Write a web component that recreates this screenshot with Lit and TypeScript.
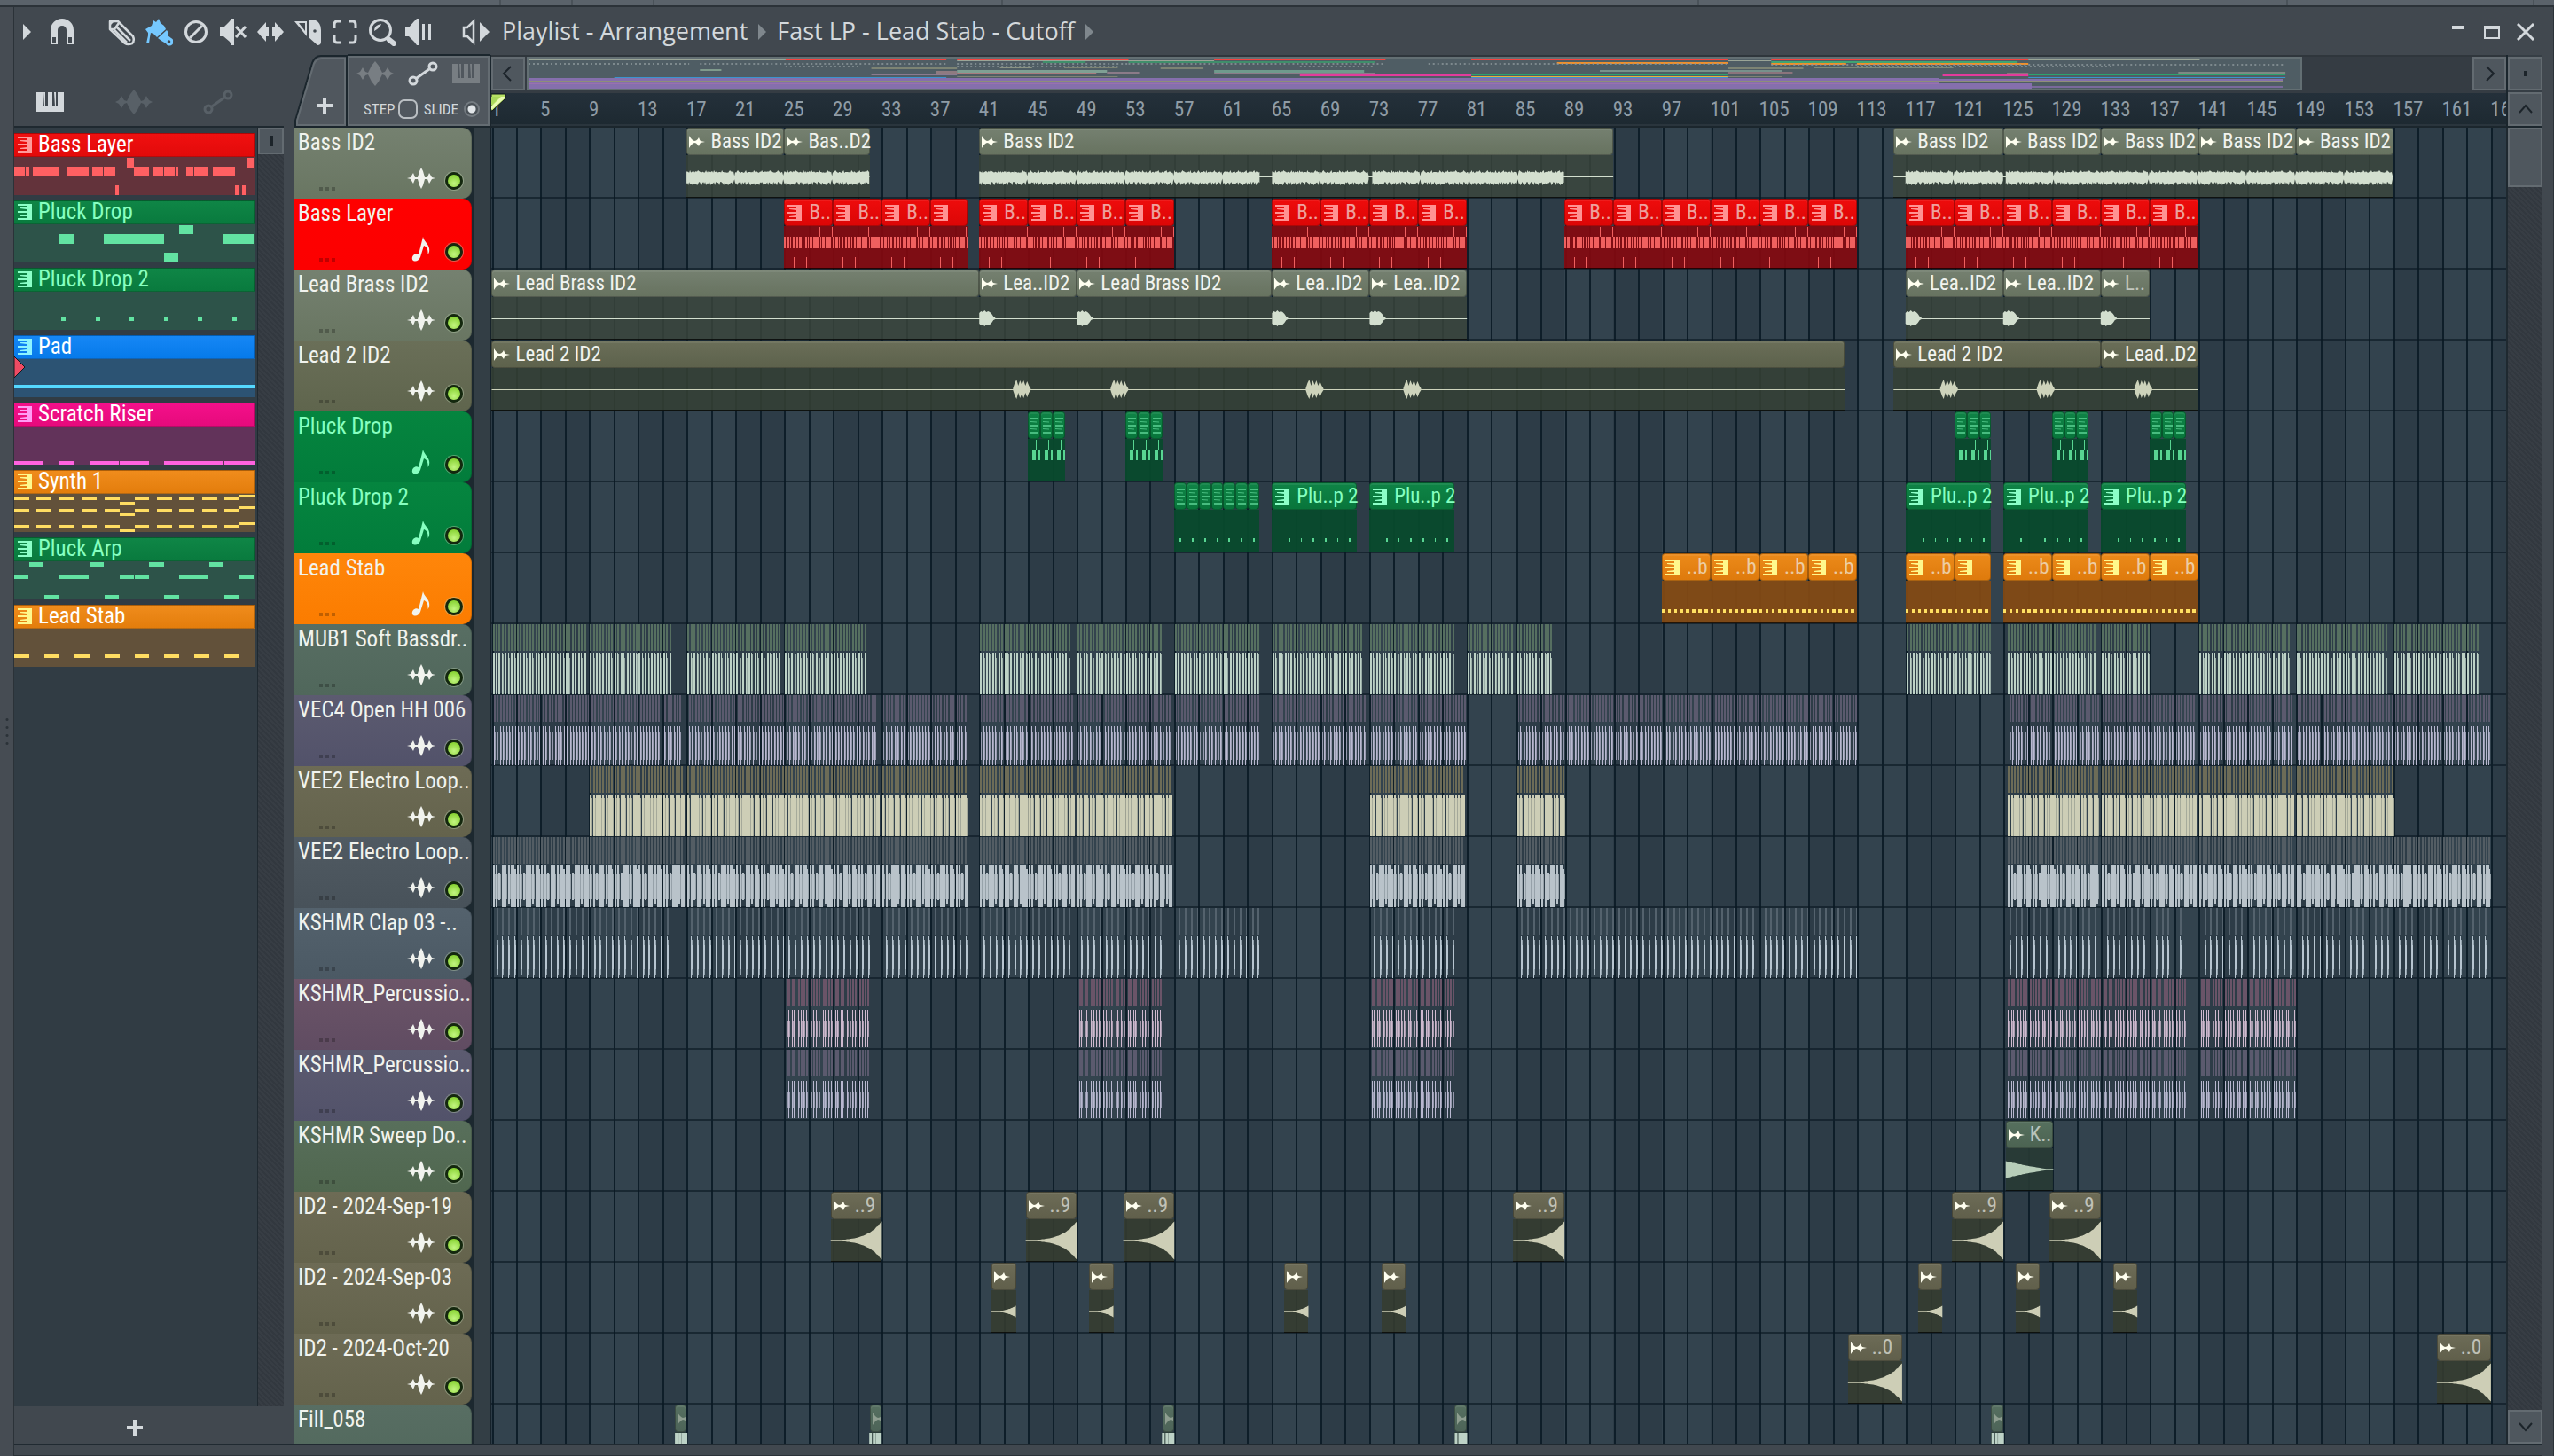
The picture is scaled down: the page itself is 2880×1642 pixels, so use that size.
import { LitElement, html, svg, css, nothing } from "lit";

/* ---------- time scale ---------- */
const VIEW_W = 2271; // drawing units across the visible part of the arrangement
const BAR = 13.74; // drawing units per bar
const barX = (b: number) => (b - 1) * BAR + 0.5;
const pct = (u: number) => `${((u / VIEW_W) * 100).toFixed(4)}%`;

/* ---------- note patterns ---------- */
type Note = [number, number, number, number];
interface Pattern { x: number; w: number; bars: number; notes: Note[] }
const row = (y: number, h: number, w: number, xs: number[]): Note[] => xs.map((x) => [x, y, w, h]);
const spans = (y: number, h: number, list: [number, number][]): Note[] => list.map(([x, w]) => [x, y, w, h]);

const patterns: Record<string, Pattern> = {
  bass: {
    x: 35, w: 588, bars: 4,
    notes: [
      ...spans(34, 32, [[35, 27], [63, 8], [81, 27], [109, 27], [137, 8], [163, 18], [182, 26], [209, 8], [227, 26], [254, 28],
        [328, 27], [356, 8], [373, 27], [401, 27], [429, 8], [456, 18], [475, 26], [502, 9], [520, 26], [547, 28]]),
      ...spans(3, 32, [[310, 18], [603, 18]]),
      ...spans(96, 32, [[282, 9], [575, 9], [593, 9]]),
    ],
  },
  bassClip: {
    x: 0, w: 110, bars: 4,
    notes: [0, 27.5, 55, 82.5].flatMap((o) => [
      ...spans(34, 34, [[0, 2], [3, 2], [6, 4], [11, 2], [14, 3], [18, 1], [20, 4]]).map(([x, y, w, h]): Note => [x + o, y, w, h]),
      [o + 26, 2, 1, 32] as Note, [o + 23, 97, 1, 32] as Note,
    ]),
  },
  pluck: {
    x: 35, w: 588, bars: 1,
    notes: [...spans(33, 32, [[145, 36], [255, 72], [328, 73], [548, 73]]), ...spans(2, 32, [[438, 36]]), ...spans(95, 32, [[401, 36]])],
  },
  pluck2: { x: 35, w: 588, bars: 7, notes: row(88, 11, 11, [150, 234, 317, 401, 485, 568]) },
  pluck2s: { x: 0, w: 84, bars: 1, notes: row(88, 11, 11, [36]) },
  pad: { x: 0, w: 384, bars: 4, notes: [[0, 88, 384, 12]] },
  riser: { x: 23, w: 384, bars: 8, notes: spans(117, 11, [[23, 47], [95, 23], [143, 47], [191, 47], [263, 47], [311, 47], [359, 48]]) },
  synth: {
    x: 23, w: 384, bars: 4,
    notes: [12, 50, 104].flatMap((y) => [
      ...row(y, 9, 24, [23, 59, 95, 131, 167, 215, 251, 287, 323, 359]),
      ...row(y + 15, 9, 24, [191]), ...row(y - 8, 9, 24, [383]),
    ]),
  },
  arp: {
    x: 23, w: 384, bars: 4,
    notes: [...row(4, 14, 23, [47, 143, 239, 335]), ...row(45, 14, 23, [23, 95, 119, 191, 215, 287, 311, 383]), ...row(114, 14, 23, [71, 167, 263, 359])],
  },
  stab: { x: 23, w: 384, bars: 4, notes: row(88, 11, 24, [23, 71, 119, 167, 215, 263, 311, 359]) },
};

const noteView = (key: string, bars?: number) => {
  const p = patterns[key];
  const w = bars ? (p.w * bars) / p.bars : p.w;
  return html`<svg class="notes" viewBox="${p.x} 0 ${w} 129" preserveAspectRatio="none" aria-hidden="true">
    ${p.notes.map(([x, y, nw, nh]) => svg`<rect x=${x} y=${y} width=${nw} height=${nh} />`)}
  </svg>`;
};

/* ---------- picker ---------- */
const picker = [
  { name: "Bass Layer", tone: "red", pat: "bass" },
  { name: "Pluck Drop", tone: "green", pat: "pluck" },
  { name: "Pluck Drop 2", tone: "green", pat: "pluck2" },
  { name: "Pad", tone: "blue", pat: "pad", cue: true },
  { name: "Scratch Riser", tone: "pink", pat: "riser" },
  { name: "Synth 1", tone: "orange", pat: "synth" },
  { name: "Pluck Arp", tone: "green", pat: "arp" },
  { name: "Lead Stab", tone: "orange", pat: "stab" },
];

/* ---------- tracks ---------- */
type Clip = { s: number; e: number; t?: string; dim?: boolean; pat?: string; mini?: boolean };
interface Track {
  name: string; tone: string; note?: boolean;
  clips?: Clip[]; wave?: string; beats?: string; ranges?: [number, number][];
}
const chain = (s: number, n: number, len: number, extra: Partial<Clip>): Clip[] =>
  Array.from({ length: n }, (_, i) => ({ s: s + i * len, e: s + (i + 1) * len, ...extra }));

const B: Partial<Clip> = { t: "B..", dim: true, pat: "bassClip" };
const S: Partial<Clip> = { t: "..b", dim: true, pat: "stab" };
const M: Partial<Clip> = { mini: true, pat: "pluck" };
const at = (starts: number[], len: number, t?: string): Clip[] => starts.map((s) => ({ s, e: s + len, t, dim: true }));

const tracks: Track[] = [
  {
    name: "Bass ID2", tone: "sage", wave: "bass",
    clips: [{ s: 17, e: 25, t: "Bass ID2" }, { s: 25, e: 32, t: "Bas..D2" }, { s: 41, e: 93, t: "Bass ID2" }, { s: 116, e: 125, t: "Bass ID2" },
      ...chain(125, 4, 8, { t: "Bass ID2" })],
  },
  {
    name: "Bass Layer", tone: "red", note: true,
    clips: [...chain(25, 3, 4, B), { s: 37, e: 40, pat: "bassClip" }, ...chain(41, 4, 4, B), ...chain(65, 4, 4, B), ...chain(89, 6, 4, B), ...chain(117, 6, 4, B)],
  },
  {
    name: "Lead Brass ID2", tone: "sage", wave: "brass",
    clips: [{ s: 1, e: 41, t: "Lead Brass ID2" }, { s: 41, e: 49, t: "Lea..ID2" }, { s: 49, e: 65, t: "Lead Brass ID2" },
      ...chain(65, 2, 8, { t: "Lea..ID2" }), ...chain(117, 2, 8, { t: "Lea..ID2" }), { s: 133, e: 137, t: "L..", dim: true }],
  },
  {
    name: "Lead 2 ID2", tone: "olive", wave: "lead",
    clips: [{ s: 1, e: 112, t: "Lead 2 ID2" }, { s: 116, e: 133, t: "Lead 2 ID2" }, { s: 133, e: 141, t: "Lead..D2" }],
  },
  { name: "Pluck Drop", tone: "green", note: true, clips: [45, 53, 121, 129, 137].flatMap((s) => chain(s, 3, 1, M)) },
  {
    name: "Pluck Drop 2", tone: "green", note: true,
    clips: [...chain(57, 7, 1, { mini: true, pat: "pluck2s" }), ...[65, 73, 117, 125, 133].map((s) => ({ s, e: s + 7, t: "Plu..p 2", pat: "pluck2" }))],
  },
  {
    name: "Lead Stab", tone: "orange", note: true,
    clips: [...chain(97, 4, 4, S), { s: 117, e: 121, ...S }, { s: 121, e: 124, pat: "stab" }, ...chain(125, 4, 4, S)],
  },
  {
    name: "MUB1 Soft Bassdr..", tone: "moss", beats: "kick",
    ranges: [[1, 8.65], [9, 15.85], [17, 24.65], [25, 31.85], [41, 48.6], [49, 55.9], [57, 64], [65, 72.6], [73, 79.9], [81, 84.8], [85, 88],
      [117, 123.9], [125.3, 132.6], [133, 137], [141, 148.6], [149, 156.6], [157, 163.9]],
  },
  {
    name: "VEC4 Open HH 006", tone: "violet", beats: "hat",
    ranges: [[1.1, 16.7], [17.1, 32.7], [33, 40], [41, 48.7], [49, 56.8], [57, 64], [65, 72.8], [73, 81], [85, 113],
      [125.4, 132.8], [133, 140.8], [141, 148.8], [149, 165]],
  },
  {
    name: "VEE2 Electro Loop..", tone: "khaki", beats: "dense",
    ranges: [[9, 16.7], [17, 32.7], [33, 40], [41, 48.7], [49, 56.8], [73, 80.8], [85, 89], [125.3, 132.8], [133, 140.8], [141, 148.8], [149, 157]],
  },
  {
    name: "VEE2 Electro Loop..", tone: "slate", beats: "loop",
    ranges: [[1, 16.7], [17, 32.7], [33, 40], [41, 48.7], [49, 56.8], [73, 80.8], [85, 89], [125.3, 132.8], [133, 140.8], [141, 148.8], [149, 165]],
  },
  {
    name: "KSHMR Clap 03 -..", tone: "steel", beats: "clap",
    ranges: [[1.3, 15.9], [17.3, 32], [33.3, 40], [41.3, 48.6], [49.3, 56], [57.3, 64], [73.3, 80], [85.3, 113], [125.4, 132.6], [133.4, 140], [141.4, 148.7], [149.4, 165]],
  },
  { name: "KSHMR_Percussio..", tone: "plum", beats: "perc", ranges: [[25, 32], [49, 56], [73, 80], [125.3, 140], [141, 149]] },
  { name: "KSHMR_Percussio..", tone: "violet", beats: "perc", ranges: [[25, 32], [49, 56], [73, 80], [125.3, 140], [141, 149]] },
  { name: "KSHMR Sweep Do..", tone: "leaf", wave: "fall", clips: at([125.2], 3.9, "K..") },
  { name: "ID2 - 2024-Sep-19", tone: "khaki", wave: "rise", clips: at([28.8, 44.8, 52.8, 84.8, 120.8, 128.8], 4.2, "..9") },
  { name: "ID2 - 2024-Sep-03", tone: "khaki", wave: "swell", clips: at([42, 50, 66, 74, 118, 126, 134], 2) },
  { name: "ID2 - 2024-Oct-20", tone: "khaki", wave: "rise", clips: at([112.25, 160.55], 4.45, "..0") },
  { name: "Fill_058", tone: "moss", wave: "fill", clips: at([16, 32, 56, 80, 124], 1) },
];

/* ---------- wave drawing ---------- */
const rnd = (i: number) => { const v = Math.sin(i * 127.1 + 11.7) * 43758.5453; return v - Math.floor(v); };

function wobble(from: number, to: number, cy: number): string {
  const x0 = barX(from), x1 = barX(to);
  let up = "", down = "";
  for (let x = Math.round(x0), i = 0; x <= x1; x += 1, i++) {
    const dip = i % 55 === 54 ? 0.3 : 1;
    const a = (5 + (i % 9 === 4 ? 3 : rnd(i) * 2)) * dip;
    const b = (5 + (i % 5 === 2 ? 4 : rnd(i + 500) * 3)) * dip;
    up += `${i ? "L" : "M"}${x} ${(cy - a).toFixed(1)}`;
    down = `L${x} ${(cy + b).toFixed(1)}` + down;
  }
  return up + down + "Z";
}
/* A short hit given as half-heights on a two-unit raster. */
function hitShape(x0: number, heights: number[]): string {
  const up = heights.map((h, i) => `${i ? "L" : "M"}${x0 + i * 2} ${55 - h}`).join("");
  const down = heights.map((h, i) => `L${x0 + i * 2} ${55 + h}`).reverse().join("");
  return up + down + "Z";
}
const burst = (b: number) => hitShape(Math.round(barX(b)), [6, 8, 7, 9, 7, 8, 7, 5, 2, 1]);
const puff = (b: number) => hitShape(Math.round(barX(b)) - 3, [1, 7, 11, 4, 10, 5, 10, 4, 9, 4, 1]);

function ramp(s: number, e: number, amp: number, k: number, falling: boolean): string {
  const x0 = barX(s), w = barX(e) - x0, n = 28;
  let up = "", down = "";
  for (let i = 0; i <= n; i++) {
    const f = i / n;
    const g = falling ? Math.pow(1 - f, 1.3) : (Math.exp(k * f) - 1) / (Math.exp(k) - 1);
    const a = Math.max(0.8, amp * g * (1 - rnd(i) * 0.08));
    const x = (x0 + w * f).toFixed(1);
    up += `${i ? "L" : "M"}${x} ${(55 - a).toFixed(1)}`;
    down = `L${x} ${(55 + a).toFixed(1)}` + down;
  }
  return up + down + "Z";
}
const flat = (c: Clip) => `M${barX(c.s)} 55H${barX(c.e)}V56H${barX(c.s)}Z`;

function wavePath(t: Track): string {
  const clips = t.clips ?? [];
  switch (t.wave) {
    case "bass":
      return clips.map(flat).join("") +
        ([[17, 25], [25, 32], [41, 64], [65, 73], [73.2, 89], [117, 125], [125.2, 133], [133, 141], [141, 149], [149, 157]] as [number, number][])
          .map(([a, b]) => wobble(a, b, 56)).join("");
    case "brass": return clips.map(flat).join("") + [41, 49, 65, 73, 117, 125, 133].map(burst).join("");
    case "lead": return clips.map(flat).join("") + [44, 52, 68, 76, 120, 128, 136].map(puff).join("");
    case "rise": return clips.map((c) => ramp(c.s, c.e, 23, 3.6, false)).join("");
    case "swell": return clips.map((c) => ramp(c.s, c.e, 7, 2.8, false)).join("");
    case "fall": return clips.map((c) => ramp(c.s, c.e, 10, 0, true)).join("");
    case "fill": return clips.map((c) => { const x = Math.round(barX(c.s)); return `M${x} 32h3v48h-3zM${x + 4} 32h3v48h-3zM${x + 7.3} 32h6.700v48h-6.700z`; }).join("");
  }
  return "";
}

/* Tiny repeated samples are drawn as stripes: caps above, hits below. */
function beatPaths(t: Track) {
  let cap = "", hit = "", tail = "";
  const v = (x: number, w: number, y0: number, y1: number) => `M${x} ${y0}h${w}V${y1}h${-w}z`;
  for (const [s, e] of t.ranges ?? []) {
    const x1 = barX(e) - 1;
    if (t.beats === "perc") {
      const offs = [2, 4, 8, 10, 15, 18, 21, 24, 29, 32, 35, 38, 43, 45, 49, 52];
      for (let b = Math.floor(s); b < e; b += 4)
        for (const o of offs) {
          const x = Math.round(barX(b) + o + 1);
          if (x > x1 || x < barX(s)) continue;
          cap += v(x, 2, 0, 30);
          hit += v(x, 1, 35, 77);
          tail += v(x + 1, 1, 47, 65);
        }
      continue;
    }
    const step = t.beats === "clap" ? BAR / 2 : BAR / 4;
    for (let x = barX(s) + 1, k = 0; x < x1; x += step, k++) {
      const p = Math.round(x);
      if (t.beats === "kick") {
        cap += v(p, 2, 0, 30); hit += v(p, k % 2 ? 1 : 2, 32, 79);
        tail += v(p + 1, 1, k % 3 ? 38 : 34, 79);
      } else if (t.beats === "hat") {
        cap += v(p, 2, 0, 30); hit += v(p, 1, 35, 79);
        tail += v(p + 1, 1, 42, 73);
      } else if (t.beats === "dense") {
        cap += v(p, 2, 0, 30); hit += v(p, k % 4 === 2 ? 4 : 2, 32, 79);
        tail += v(p + 2, 1, 36, 79);
      } else if (t.beats === "loop") {
        cap += v(p, 2, 0, 30);
        const c = k % 8;
        hit += v(p, c === 3 || c === 6 ? 4 : 2, c === 2 ? 40 : c === 7 ? 36 : 32, c === 2 ? 71 : c === 5 ? 75 : 79);
        tail += v(p + 2, 1, 42, 70);
      } else {
        cap += v(p, 2, 0, 30);
        hit += v(p, 1, 32, 79) + v(p + 1, 1, 42, 69);
        tail += v(p + 1, 1, 36, 75);
      }
    }
  }
  return { cap, hit, tail };
}

const gridLines = Array.from({ length: 83 }, (_, i) => Math.round(barX(1 + i * 2)));
const gridPath = gridLines.map((x) => `M${x} 0h2v80h-2z`).join("");

/* ---------- icons ---------- */
const icon = (cls: string, vb: string, body: unknown) => html`<svg class=${cls} viewBox=${vb} aria-hidden="true">${body}</svg>`;
const waveIcon = (cls: string) => icon(cls, "0 0 42 28", svg`<path d="M0 14L4 12L7 7L10 12L13 13L17 5L21 0L25 5L29 13L32 12L35 7L38 12L42 14L38 16L35 21L32 16L29 15L25 23L21 28L17 23L13 15L10 16L7 21L4 16Z"/>`);
const starWave = icon("star", "0 0 32 24", svg`<path d="M0 12L4 11L7 6L9 11L12 11L14 4L16 0L18 4L20 11L23 11L25 6L28 11L32 12L28 13L25 18L23 13L20 13L18 20L16 24L14 20L12 13L9 13L7 18L4 13Z"/>`);
const noteIcon = icon("qnote", "0 0 22 28", svg`<path d="M13 0C14 5 19 8 20 13C20.500 16 20 18 18.500 20C19 14 17 11 14 10L10 23C9 26 6 28 3.500 27.500C0.500 27 0 23.500 2 21C4 19 6.500 19 8 20Z"/>`);
const autoIcon = (cls: string) => icon(cls, "0 0 34 28", svg`<g fill="none" stroke="currentColor" stroke-width="3"><circle cx="6" cy="22" r="4"/><circle cx="28" cy="6" r="4"/><path d="M10 19L24 9"/></g>`);
const pianoIcon = (cls: string) => icon(cls, "0 0 31 22", svg`<path d="M0 0H7V16H9L8 0H10V16H13V0H18V16H21L20 0H22V16H24V0H31V22H0Z"/>`);
const audioMark = icon("mark", "0 0 18 14", svg`<path d="M0 0Q3 5 6 6L8 5.500Q10 4 11 2Q12 5 13 6L18 7L13 8Q12 9 11 12Q10 10 8 8.500L6 8Q3 9 0 14Z"/>`);
const keysMark = icon("keys", "0 0 16 18", svg`<path d="M0 0H16V18H0V16H10V14L2 14V13L10 12V10H0V8H10V6L2 5V4L10 4V2H0Z"/>`);
const miniMark = icon("lines", "0 0 9 18", svg`<path d="M0 0H9V2H0ZM0 4L7 4.500V5.500L0 5ZM0 8H9V10H0ZM0 12L7 12.500V13.500L0 13ZM0 16H9V18H0Z"/>`);
const chev = (dir: string) => {
  const d: Record<string, string> = { left: "M15 4L7 12L15 20", right: "M9 4L17 12L9 20", up: "M5 16L12 8L19 16", down: "M5 8L12 16L19 8" };
  return icon("chev", "0 0 24 24", svg`<path d=${d[dir]} fill="none" stroke="currentColor" stroke-width="2"/>`);
};

const tools: { label: string; on?: boolean; body: unknown }[] = [
  { label: "Draw", body: svg`<g fill="none" stroke="currentColor" stroke-width="2.500" stroke-linejoin="round"><path d="M3 4H12L29 21Q31 26 28 29Q23 31 20 29L3 13Z"/><path d="M10 10L26 26M7 13L22 28M13 6L8 13L3 13"/></g><path d="M3 4H8L3 9Z"/>` },
  { label: "Paint", on: true, body: svg`<path d="M1 13L8 9L10 3L13 5L16 1L18 6L22 9L24 13L14 22L10 18L7 17L6 22L5 29L2 29L4 20L4 17Z"/><path d="M25 14L27 17L26 20L30 23A4.500 4.500 0 1 1 24 29L19 26L15 23Z"/><circle cx="27.500" cy="27" r="1.800" fill="#41484f"/>` },
  { label: "Delete", body: svg`<g fill="none" stroke="currentColor" stroke-width="3"><circle cx="16" cy="16" r="11.500"/><path d="M9 23L23 9"/></g>` },
  { label: "Mute", body: svg`<path d="M1 11H5L12 4L14 1H17V31H14L12 27L5 21H1Z"/><path d="M19 10L30 22M30 10L19 22" fill="none" stroke="currentColor" stroke-width="3"/>` },
  { label: "Slip", body: svg`<path d="M1 16L11 5V11H14V21H11V27ZM31 16L21 5V11H18V21H21V27Z"/>` },
  { label: "Slice", body: svg`<path d="M17 3H25Q31 6 31 14V27Q31 31 27 31L17 22Z"/><circle cx="24" cy="15" r="1.800" fill="#41484f"/><path d="M1 4H15V21ZM6 6L13 15V6Z" fill-rule="evenodd"/>` },
  { label: "Select", body: svg`<path d="M12 4H7Q4 4 4 8V12M20 4H25Q28 4 28 8V12M12 28H7Q4 28 4 24V20M20 28H25Q28 28 28 24V20" fill="none" stroke="currentColor" stroke-width="3"/>` },
  { label: "Zoom", body: svg`<circle cx="14" cy="14" r="11.500" fill="none" stroke="currentColor" stroke-width="3"/><path d="M7 15Q7 8 15 7Q14 11 7 15Z"/><path d="M24 25L29 29" stroke="currentColor" stroke-width="6" stroke-linecap="round"/>` },
  { label: "Playback", body: svg`<path d="M0 11H4L10 4L13 1H16V31H13L10 27L4 21H0Z"/><path d="M19 7H22V25H19ZM26 7H29V25H26Z"/>` },
];

/* ---------- overview ---------- */
const MAP = 12.08;
const mx = (b: number) => (b - 1) * MAP;
type Seg = [number, number, number, number, string];
const mapSegs: Seg[] = [
  ...([[25, 40], [41, 57], [65, 81], [89, 113], [117, 141]] as [number, number][]).map(([a, b]): Seg => [a, b, 2, 2, "#f8433f"]),
  [1, 25, 3, 1, "#9aa597"], [41, 65, 4, 1, "#9aa597"], [81, 89, 2, 1, "#9aa597"], [113, 117, 4, 1, "#9aa597"], [141, 157, 3, 1, "#9aa597"],
  [49, 53, 5, 2, "#3f8f6b"], [57, 80, 5, 2, "#3f8f6b"], [117, 140, 5, 2, "#3fa573"],
  [97, 113, 6, 2, "#f0902c"], [117, 124, 7, 2, "#f0902c"], [125, 141, 7, 2, "#f0902c"],
  [33, 41, 12, 2, "#7d8474"], [45, 48, 12, 1, "#8b9484"], [51, 56, 11, 2, "#7d8474"], [60, 64, 12, 2, "#7d8474"], [113, 120, 12, 2, "#7d8474"], [121, 134, 11, 2, "#7b8a79"],
  [17, 19, 14, 2, "#7f9a8c"], [39, 41, 16, 3, "#8f7b80"], [41, 55, 15, 3, "#7fa094"], [41, 54, 18, 2, "#a87b7e"], [55, 58, 17, 2, "#8b7b88"],
  [65, 79, 15, 3, "#6f9a8c"], [65, 80, 18, 1, "#8b7b88"], [101, 118, 15, 2, "#77918c"], [113, 119, 17, 3, "#8b747c"], [139, 141, 18, 2, "#8b747c"], [155, 165, 17, 3, "#7f8a84"],
  [33, 41, 20, 1, "#8b7b90"], [73, 80, 19, 1, "#8b7b90"], [81, 97, 20, 1, "#8b7b90"],
  [73, 89, 20, 2, "#e33b9c"], [133, 141, 20, 2, "#e33b9c"], [89, 113, 20, 1, "#2ca46f"], [141, 165, 20, 1, "#2ca46f"],
  [9, 40, 23, 1, "#3b93cf"], [41, 56, 22, 1, "#7d8474"], [89, 113, 22, 1, "#e9b23a"], [89, 113, 23, 1, "#3b93cf"], [141, 165, 23, 1, "#3b93cf"], [113, 118, 22, 1, "#7d8474"],
];

class AppRoot extends LitElement {
  static styles = css`
    :host { display: block; font-family: "Roboto Condensed", "Roboto", "Liberation Sans", sans-serif; color: #d3d8dc; }
    * { box-sizing: border-box; }
    button { appearance: none; border: 0; padding: 0; margin: 0; background: none; color: inherit; font: inherit; display: grid; place-items: center; cursor: pointer; }
    svg { display: block; fill: currentColor; }
    .window { height: 100vh; display: grid; grid-template-rows: 6px 1fr; background: #41484f; overflow: hidden; }
    .strip { background: #5a626a; width: 100%; height: 100%; }
    .frame { display: grid; grid-template-columns: 16px 1fr 13px; border-top: 2px solid #2b3238; min-height: 0; }
    .edge { background: #464c53; border-right: 1px solid #2b3238; display: grid; place-items: center; }
    .grip { width: 6px; height: 36px; background: radial-gradient(circle, #2b3238 1px, transparent 2px) 0 0 / 6px 9px; }
    .edge.r { background: #41484f; }
    .main { display: grid; grid-template-rows: 54px 1fr 14px; min-width: 0; min-height: 0; }
    .bottom { border-top: 2px solid #202a31; border-bottom: 1px solid #2b3238; }

    /* toolbar */
    .bar { display: flex; align-items: center; padding: 2px 0 0 0; }
    .bar button { width: 42px; height: 40px; flex: none; }
    .bar .menu { width: 28px; }
    .bar .menu .sep { color: #d3d8dc; }
    .bar .magnet { margin: 0 25px 0 5px; }
    .tool { width: 32px; height: 32px; }
    .on { color: #75c8ff; }
    .bar .play { margin-left: 22px; }
    .title { display: flex; align-items: center; gap: 12px; margin: 0 0 0 8px; font-family: "Open Sans", "Noto Sans", sans-serif; font-size: 27px; line-height: 32px; font-weight: 400; white-space: nowrap; }
    .title span { padding-bottom: 2px; }
    .sep { width: 9px; height: 18px; color: #7f878d; }
    .space { flex: 1; }
    .bar .win { width: 38px; }
    .win svg { width: 20px; height: 20px; }

    .work { display: grid; grid-template-columns: 316px 1fr; min-height: 0; }

    /* picker */
    .picker { display: grid; grid-template-rows: 80px 1fr 42px; min-height: 0; padding-right: 12px; }
    .tabs { display: flex; align-items: center; padding: 26px 0 0 25px; }
    .tabs button { height: 40px; }
    .tabs .off { color: #586067; }
    .tabs .p { width: 31px; }
    .tabs .w { width: 42px; margin-left: 58px; }
    .tabs .a { width: 34px; margin-left: 57px; }
    .ic-piano { width: 31px; height: 22px; }
    .ic-wave { width: 42px; height: 28px; }
    .ic-auto { width: 34px; height: 28px; }
    .listbox { display: grid; grid-template-columns: 271px 1fr; gap: 4px; background: #1f2930; border-top: 2px solid #1f2930; min-height: 0; }
    .list { background: #313c44; box-shadow: 3px 0 0 #313c44; padding: 6px 0 0 0; margin: 0; list-style: none; overflow: hidden; }
    .item { height: 70px; margin-bottom: 6px; display: grid; grid-template-rows: 27px 43px; position: relative; }
    .item .cap { display: flex; align-items: center; gap: 7px; padding: 0 0 2px 4px; font-size: 25px; line-height: 24px; color: #fff; border: 1px solid rgba(0,0,0,.25); border-left: 0; background: linear-gradient(var(--hi), var(--lo)); white-space: nowrap; }
    .item .body { background: var(--body); min-height: 0; }
    .keys { width: 16px; height: 18px; color: var(--ink); flex: none; }
    .notes { width: 100%; height: 100%; fill: var(--note); shape-rendering: crispEdges; }
    .cue { position: absolute; left: 0; top: 24px; width: 13px; height: 24px; color: #ef4b63; }
    .item.red { --hi: #f01010; --lo: #e20a0a; --body: #63333b; --note: #ff6062; --ink: #ff9a9a; }
    .item.green { --hi: #0f8646; --lo: #097a3e; --body: #2d5349; --note: #62e3a2; --ink: #8cffc8; }
    .item.green .cap { color: #86ffc0; }
    .item.blue { --hi: #1687f5; --lo: #067aea; --body: #2c5373; --note: #54d8ff; --ink: #8cf4ff; }
    .item.pink { --hi: #f4108a; --lo: #e60a7c; --body: #62335a; --note: #ff62e0; --ink: #ff9cf4; }
    .item.orange { --hi: #f08c1c; --lo: #e37d0c; --body: #62513a; --note: #ffdd62; --ink: #fff88c; }
    .vscroll { display: grid; grid-template-rows: auto 1fr auto; background: repeating-linear-gradient(45deg, #373d44 0 2px, #32383f 2px 4px); min-height: 0; }
    .sb { background: #4f575e; border: 2px solid #636b71; color: #1c242a; }
    .vscroll .thumb28 { height: 30px; border-bottom: 2px solid #636b71; }
    .tick { width: 4px; height: 12px; background: #1c242a; }
    .tick.small { height: 6px; }
    .addrow { display: grid; padding: 6px 32px 0 0; }
    .plus { width: 18px; height: 18px; }

    /* playlist */
    .playlist { display: grid; grid-template-rows: 82px 1fr; min-width: 0; min-height: 0; }
    .head { display: grid; grid-template-columns: 222px 1fr 41px; border-bottom: 2px solid #1b262d; background: #363e45; }
    .modes { display: grid; grid-template-columns: 60px 1fr; background: #41484f; border-right: 2px solid #1b262d; }
    .addtab { display: grid; }
    .addtab > * { grid-area: 1 / 1; }
    .addtab svg.shape { width: 100%; height: 100%; }
    .addtab button { padding: 34px 0 0 8px; }
    .panel { border: 2px solid #646c72; background: #50575e; display: grid; grid-template-rows: 36px 1fr; box-shadow: 0 -2px 0 #1b262d; margin-top: 1px; }
    .icons { display: flex; align-items: center; justify-content: space-between; padding: 0 9px 0 8px; }
    .icons .off { color: #787e83; }
    .opts { display: flex; align-items: center; padding: 4px 9px 0 16px; font-size: 17px; line-height: 20px; }
    .opts label { display: flex; align-items: center; gap: 3px; white-space: nowrap; }
    .opts label + label { margin-left: auto; gap: 6px; }
    .opts input { appearance: none; margin: 0; width: 22px; height: 22px; border: 2px solid #b9bec2; border-radius: 7px; }
    .opts input[type="radio"] { width: 18px; height: 18px; border-radius: 50%; border-color: #747b81; background: radial-gradient(circle, #e2e6e9 0 4px, #4a5157 5px); }
    .mid { display: grid; grid-template-rows: 43px 37px; min-width: 0; }
    .over { display: grid; grid-template-columns: 38px 1fr 38px; gap: 2px; background: #353c43; padding-bottom: 3px; border-top: 2px solid #2f363c; }
    .chev { width: 24px; height: 24px; }
    .map { min-width: 0; display: grid; grid-template-columns: 2002fr 190fr; }
    .map svg { width: 100%; height: 38px; background: #4f5d64; border: 2px solid #636f73; }
    .ruler { background: linear-gradient(#24303a, #1d2931); color: #8f9ca6; display: flex; overflow: hidden; position: relative; font-size: 23px; line-height: 38px; box-shadow: inset 0 -2px 0 #2a353d; }
    .ruler span { flex: none; white-space: nowrap; }
    .playhead { position: absolute; left: 0; top: 0; width: 18px; height: 22px; }
    .corner { display: grid; grid-template-rows: 38px 38px; gap: 2px; border-left: 2px solid #1b262d; padding-top: 2px; }

    .area { display: grid; grid-template-columns: 222px 1fr 41px; min-height: 0; }
    .heads { overflow: hidden; min-height: 0; background: linear-gradient(90deg, #1c282f 0 202px, #333e45 202px 220px, #16222a 220px); }
    .th { height: 80px; width: 200px; border-radius: 0 10px 10px 0; background: linear-gradient(var(--t), var(--b)); color: #f1f3ee; display: grid; grid-template-columns: minmax(0, 1fr); grid-template-rows: 34px 1fr; padding: 0 10px 0 4px; box-shadow: inset -1px 0 0 rgba(0,0,0,.15); }
    .th .nm { font-size: 25px; line-height: 34px; white-space: nowrap; }
    .th .ft { display: flex; align-items: center; justify-content: flex-end; gap: 11px; }
    .dots { width: 19px; height: 4px; margin: 24px auto 0 24px; background: linear-gradient(90deg, rgba(0,0,0,.24) 4px, transparent 4px 7px) 0 0 / 7px 4px; }
    .star { width: 32px; height: 24px; }
    .qnote { width: 24px; height: 28px; margin-right: 4px; }
    .led { width: 20px; height: 20px; border-radius: 50%; border: 3px solid #14280e; background: radial-gradient(circle at 50% 70%, #c2f580, #8ad436 75%); box-shadow: 0 0 0 1px rgba(190,210,180,.45); margin-top: 6px; }
    .sage { --t: #758170; --b: #697662; --c1: #758070; --c2: #677360; --bd: rgba(58,70,60,.82); --wv: #d3dfcf; }
    .red { --t: #ff0000; --b: #fc0000; --c1: #ee0c0c; --c2: #dc0606; --bd: rgba(134,8,14,.9); --note: #f0605f; --ink: #ff9292; --wv: #fff; }
    .olive { --t: #6a6f58; --b: #5f654d; --c1: #6a6e58; --c2: #5d624c; --bd: rgba(52,64,52,.86); --wv: #cdd3bb; }
    .green { --t: #05853f; --b: #027c3b; --c1: #0f8446; --c2: #08753b; --bd: rgba(8,74,44,.93); --note: #58d592; --ink: #8cffc8; --wv: #fff; }
    .orange { --t: #ff860a; --b: #fb7c00; --c1: #ec8a1a; --c2: #de7a0c; --bd: rgba(132,74,20,.94); --note: #ffe062; --ink: #fff88c; --wv: #fff; }
    .moss { --t: #586e63; --b: #50675b; --c1: #566f60; --c2: #4d6458; --bd: rgba(44,62,56,.9); --wv: #bdd2c6; }
    .violet { --t: #5c5b70; --b: #52526a; --c1: #5b5a6e; --c2: #5b5a6e; --wv: #b9b8d0; }
    .khaki { --t: #6d6b55; --b: #64634c; --c1: #6d6c57; --c2: #605f4b; --bd: rgba(54,60,48,.88); --wv: #cdceb6; }
    .slate { --t: #505a62; --b: #48525a; --c1: #535d64; --c2: #535d64; --wv: #b9c3ca; }
    .steel { --t: #54626d; --b: #4b5964; --c1: #54626d; --c2: #54626d; --wv: #b7c5d0; }
    .plum { --t: #6c5568; --b: #604c62; --c1: #6a5468; --c2: #6a5468; --wv: #cfb9cf; }
    .leaf { --t: #586f5b; --b: #50674f; --c1: #56705e; --c2: #4c6352; --bd: rgba(40,58,52,.9); --wv: #b7cdb9; }
    .th.green { color: #86ffc0; }

    .lanes { position: relative; overflow: hidden; min-width: 0; min-height: 0; background: #2d3c47; }
    .grid { position: absolute; inset: 0; width: 100%; height: 100%; shape-rendering: crispEdges; }
    .lane { height: 80px; position: relative; box-shadow: inset 0 -2px 0 rgba(10,24,34,.62); }
    .layer { position: absolute; inset: 0; width: 100%; height: 100%; pointer-events: none; }
    .crisp { shape-rendering: crispEdges; }
    .clip { position: absolute; top: 0; height: 79px; display: grid; grid-template-columns: minmax(0, 1fr); grid-template-rows: 31px 48px; }
    .clip .cap { background: linear-gradient(var(--c1), var(--c2)); border: 1px solid rgba(0,0,0,.28); box-shadow: inset 0 2px 0 rgba(255,255,255,.07); border-radius: 4px; display: flex; align-items: center; padding: 0 0 0 2px; gap: 6px; color: #f1f3ee; font-size: 23px; line-height: 28px; white-space: nowrap; }
    .clip .body { background: var(--bd); border-bottom: 1px solid rgba(0,0,0,.7); min-height: 0; }
    .clip.dim .txt { opacity: .65; }
    .clip.green .cap { color: #86ffc0; }
    .clip.fill .cap { overflow: hidden; }
    .mark { width: 18px; height: 14px; color: #fffff0; flex: none; }
    .clip .keys { margin: 0 2px 0 1px; }
    .lines { width: 9px; height: 18px; flex: none; opacity: .5; }
    .clip.fill .mark { opacity: .35; }
    .right { display: grid; padding-left: 2px; background: #1f2930; min-height: 0; }
    .thumb { height: 67px; border-bottom: 2px solid #636b71; }
    .right .sb.end { height: 38px; }
  `;

  private clipView(t: Track, c: Clip) {
    const left = barX(c.s), width = barX(c.e) - left;
    return html`<div
      class="clip ${t.tone} ${c.dim ? "dim" : ""} ${t.wave === "fill" ? "fill" : ""}"
      style="left:${pct(left)};width:${pct(width)}">
      <div class="cap">${c.mini ? miniMark : t.note ? keysMark : audioMark}${c.t ? html`<span class="txt">${c.t}</span>` : nothing}</div>
      <div class="body">${c.pat ? noteView(c.pat, c.e - c.s) : nothing}</div>
    </div>`;
  }

  private laneView(t: Track) {
    const beats = t.beats ? beatPaths(t) : null;
    const sparse = t.beats === "hat" || t.beats === "perc" || t.beats === "clap";
    return html`<div class="lane ${t.tone}">
      ${t.clips?.map((c) => this.clipView(t, c))}
      ${t.wave ? html`<svg class="layer" viewBox="0 0 ${VIEW_W} 80" preserveAspectRatio="none" aria-hidden="true"><path d=${wavePath(t)} fill="var(--wv)" /></svg>` : nothing}
      ${beats ? html`<svg class="layer crisp" viewBox="0 0 ${VIEW_W} 80" preserveAspectRatio="none" aria-hidden="true">
        <path d=${beats.cap} fill="var(--c1)" /><path d=${beats.tail} fill="var(--wv)" opacity=".75" /><path d=${beats.hit} fill="var(--wv)" />
        ${sparse ? svg`<path d=${gridPath} fill="#0e1e29" />` : nothing}
      </svg>` : nothing}
    </div>`;
  }

  private gridView() {
    const blocks = Array.from({ length: 21 }, (_, i) => barX(1 + i * 8));
    return html`<svg class="grid" viewBox="0 0 ${VIEW_W} 100" preserveAspectRatio="none" aria-hidden="true">
      ${blocks.map((x) => svg`<rect x=${x} y="0" width=${BAR * 4} height="100" fill="#33434e" />`)}
      ${gridLines.map((x) => svg`<rect x=${x} y="0" width="2" height="100" fill="#0e1e29" />`)}
    </svg>`;
  }

  private mapView() {
    const dash = (a: number, b: number, y: number) => svg`<path d="M${mx(a)} ${y}H${mx(b)}" stroke="#8d989b" stroke-width="1.500" stroke-dasharray="2 3" />`;
    return html`<svg viewBox="0 0 1998 34" preserveAspectRatio="none" aria-hidden="true">
      ${mapSegs.map(([a, b, y, h, f]) => svg`<rect x=${mx(a)} y=${y - 2} width=${mx(b) - mx(a)} height=${h} fill=${f} />`)}
      ${[[1, 16], [17, 40], [41, 57], [57, 81], [85, 113]].map(([a, b]) => dash(a, b, 6))}
      ${[[25, 32], [41, 56], [73, 80], [125, 149]].map(([a, b]) => dash(a, b, 9))}
      ${dash(117, 165, 7)}
      <rect x="0" y="22" width="1590" height="12" fill="#856fad" />
      <rect x="1590" y="23" width="388" height="2" fill="#856fad" />
      <rect x="1590" y="28" width="105" height="6" fill="#856fad" />
      <rect x="1695" y="31" width="283" height="2" fill="#7a6a9c" />
      <rect x="0" y="25" width="1978" height="1" fill="#8f8f78" />
      <rect x="0" y="28" width="1590" height="1" fill="#9a70b0" />
    </svg>`;
  }

  render() {
    return html`
      <div class="window">
        <svg class="strip" viewBox="0 0 2880 6" preserveAspectRatio="none" aria-hidden="true">
          <path d="M564 0V6M645 0V6M737 0V6M1130 0V6M1915 0V6M2579 0V6M2857 0V6" stroke="#3b4248" stroke-width="1" />
        </svg>
        <div class="frame">
          <div class="edge"><div class="grip"></div></div>
          <div class="main">
            <header class="bar">
              <button class="menu" aria-label="Playlist menu"><svg class="sep" viewBox="0 0 9 18"><path d="M0 0L9 9L0 18Z" /></svg></button>
              <button class="magnet" aria-label="Snap">${icon("tool", "0 0 32 32", svg`<path d="M7 30V14A9 9 0 0 1 25 14V30" fill="none" stroke="currentColor" stroke-width="8"/><path d="M5 22H9V28H5ZM23 22H27V28H23Z" fill="#41484f"/>`)}</button>
              ${tools.map((t) => html`<button class=${t.on ? "on" : ""} aria-label=${t.label}>${icon("tool", "0 0 32 32", t.body)}</button>`)}
              <button class="play" aria-label="Preview">${icon("tool", "0 0 32 32", svg`<path d="M2 11H6L13 4V28L6 21H2Z" fill="none" stroke="currentColor" stroke-width="2.500"/><path d="M20 5L31 16L20 27Z"/>`)}</button>
              <h1 class="title">
                <span>Playlist - Arrangement</span>
                <svg class="sep" viewBox="0 0 9 18" aria-hidden="true"><path d="M0 0L9 9L0 18Z" /></svg>
                <span>Fast LP - Lead Stab - Cutoff</span>
                <svg class="sep" viewBox="0 0 9 18" aria-hidden="true"><path d="M0 0L9 9L0 18Z" /></svg>
              </h1>
              <div class="space"></div>
              <button class="win" aria-label="Minimize"><svg viewBox="0 0 20 20"><path d="M3 3H17V7H3Z" /></svg></button>
              <button class="win" aria-label="Maximize"><svg viewBox="0 0 20 20"><path d="M1 3H19V18H1ZM3 7V16H17V7Z" fill-rule="evenodd" /></svg></button>
              <button class="win" aria-label="Close"><svg viewBox="0 0 20 20"><path d="M1 1L19 19M19 1L1 19" stroke="currentColor" stroke-width="3" /></svg></button>
            </header>

            <div class="work">
              <aside class="picker">
                <div class="tabs">
                  <button class="p" aria-label="Patterns">${pianoIcon("ic-piano")}</button>
                  <button class="w off" aria-label="Audio">${waveIcon("ic-wave")}</button>
                  <button class="a off" aria-label="Automation">${autoIcon("ic-auto")}</button>
                </div>
                <div class="listbox">
                  <ul class="list">
                    ${picker.map((p) => html`<li class="item ${p.tone}">
                      <div class="cap">${keysMark}<span>${p.name}</span></div>
                      <div class="body">${noteView(p.pat)}</div>
                      ${p.cue ? html`<svg class="cue" viewBox="0 0 13 24" aria-hidden="true"><path d="M0 0L12 12L0 24Z" stroke="#14191d" stroke-width="1" /></svg>` : nothing}
                    </li>`)}
                  </ul>
                  <div class="vscroll"><button class="sb thumb28" aria-label="Scroll patterns"><span class="tick"></span></button></div>
                </div>
                <div class="addrow"><button aria-label="Add pattern"><svg class="plus" viewBox="0 0 18 18"><path d="M7 0H11V7H18V11H11V18H7V11H0V7H7Z" /></svg></button></div>
              </aside>

              <section class="playlist">
                <div class="head">
                  <div class="modes">
                    <div class="addtab">
                      <svg class="shape" viewBox="0 0 60 80" preserveAspectRatio="none" aria-hidden="true">
                        <path d="M1 80V74L20 9Q23 1 30 1H59V80Z" fill="#50575e" stroke="#1b262d" stroke-width="2" />
                        <path d="M3 79V74L22 10Q25 4 31 4H57V79Z" fill="none" stroke="#646c72" stroke-width="2" />
                      </svg>
                      <button aria-label="Add track"><svg class="plus" viewBox="0 0 18 18"><path d="M7 0H11V7H18V11H11V18H7V11H0V7H7Z" /></svg></button>
                    </div>
                    <div class="panel">
                      <div class="icons">
                        <button class="off" aria-label="Audio clips">${waveIcon("ic-wave")}</button>
                        <button aria-label="Automation clips">${autoIcon("ic-auto")}</button>
                        <button class="off" aria-label="Pattern clips">${pianoIcon("ic-piano")}</button>
                      </div>
                      <div class="opts">
                        <label>STEP<input type="checkbox" /></label>
                        <label>SLIDE<input type="radio" checked /></label>
                      </div>
                    </div>
                  </div>
                  <div class="mid">
                    <div class="over">
                      <button class="sb" aria-label="Scroll left">${chev("left")}</button>
                      <div class="map">${this.mapView()}</div>
                      <button class="sb" aria-label="Scroll right">${chev("right")}</button>
                    </div>
                    <div class="ruler">
                      ${Array.from({ length: 42 }, (_, i) => html`<span style="width:${pct(BAR * 4)}">${1 + i * 4}</span>`)}
                      <svg class="playhead" viewBox="0 0 18 22" aria-hidden="true"><path d="M0 1H16V6L1 20H0Z" fill="#b7e264" stroke="#11181c" stroke-width="1" /><path d="M0 1H16V4H11L0 15V19L16 5V1Z" fill="#e9fbb4" /><path d="M0 4H10L0 14Z" fill="#a9d85c" /></svg>
                    </div>
                  </div>
                  <div class="corner">
                    <button class="sb" aria-label="Zoom"><span class="tick small"></span></button>
                    <button class="sb" aria-label="Scroll up">${chev("up")}</button>
                  </div>
                </div>
                <div class="area">
                  <div class="heads">
                    ${tracks.map((t) => html`<div class="th ${t.tone}">
                      <div class="nm">${t.name}</div>
                      <div class="ft"><span class="dots"></span>${t.note ? noteIcon : starWave}<button class="led" aria-label="Mute ${t.name}"></button></div>
                    </div>`)}
                  </div>
                  <div class="lanes">
                    ${this.gridView()}
                    ${tracks.map((t) => this.laneView(t))}
                  </div>
                  <div class="right">
                    <div class="vscroll">
                      <button class="sb thumb" aria-label="Scroll tracks"></button>
                      <span></span>
                      <button class="sb end" aria-label="Scroll down">${chev("down")}</button>
                    </div>
                  </div>
                </div>
              </section>
            </div>
            <div class="bottom"></div>
          </div>
          <div class="edge r"></div>
        </div>
      </div>
    `;
  }
}
customElements.define("app-root", AppRoot);
